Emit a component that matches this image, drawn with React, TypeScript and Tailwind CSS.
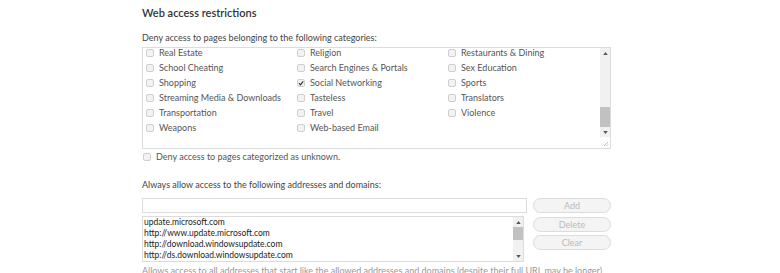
import React from "react";

const cats: [string, boolean][][] = [
  [["Real Estate", false], ["Religion", false], ["Restaurants & Dining", false]],
  [["School Cheating", false], ["Search Engines & Portals", false], ["Sex Education", false]],
  [["Shopping", false], ["Social Networking", true], ["Sports", false]],
  [["Streaming Media & Downloads", false], ["Tasteless", false], ["Translators", false]],
  [["Transportation", false], ["Travel", false], ["Violence", false]],
  [["Weapons", false], ["Web-based Email", false], ["", false]],
];

function Box({ checked }: { checked?: boolean }) {
  return (
    <span className="relative inline-block w-[8px] h-[8px] shrink-0 rounded-[2px] border border-[#cfcfcf] bg-[#f2f2f2]">
      {checked && (
        <svg viewBox="0 0 8 8" className="absolute left-[-1px] top-[-1px] w-[8px] h-[8px]">
          <path d="M2 4.2 L3.5 5.8 L6.2 2.3" stroke="#333" strokeWidth="1.2" fill="none" />
        </svg>
      )}
    </span>
  );
}

function Arrow({ up }: { up?: boolean }) {
  return (
    <svg viewBox="0 0 6 4" className="w-[5px] h-[3px]">
      {up ? <path d="M0 4 L3 0 L6 4 Z" fill="#555" /> : <path d="M0 0 L6 0 L3 4 Z" fill="#555" />}
    </svg>
  );
}

export default function App() {
  return (
    <div className="w-[780px] h-[273px] overflow-hidden bg-white" style={{ fontFamily: "Lato, 'Open Sans', sans-serif" }}>
      <div className="ml-[142px] w-[469px] pt-[6px]">
        <div className="text-[11px] leading-[14px] font-semibold text-[#333]">Web access restrictions</div>
        <div className="mt-[11px] text-[9px] leading-[14px] text-[#444] whitespace-nowrap">Deny access to pages belonging to the following categories:</div>
        <div className="mt-[2px] relative h-[102px] border border-[#dcdcdc] flex overflow-hidden">
          <div className="flex-1 pl-[3px] -mt-[3px]">
            {cats.map((row, i) => (
              <div key={i} className="flex h-[15px] items-center">
                {row.map(([label, checked], j) => (
                  <div key={j} className="w-[151px] flex items-center gap-[5px] text-[9px] text-[#555] whitespace-nowrap">
                    {label && <Box checked={checked} />}
                    <span>{label}</span>
                  </div>
                ))}
              </div>
            ))}
          </div>
          <div className="w-[10px] flex flex-col">
            <div className="flex-1 bg-[#f1f1f1] flex flex-col items-center">
              <div className="h-[10px] flex items-center"><Arrow up /></div>
              <div className="h-[49px]" />
              <div className="w-[10px] h-[20px] bg-[#c1c1c1]" />
              <div className="flex-1" />
              <div className="h-[10px] flex items-center"><Arrow /></div>
            </div>
            <div className="h-[11px] bg-white relative">
              <svg viewBox="0 0 10 11" className="absolute inset-0 w-[10px] h-[11px]">
                <path d="M8 5 L4 9 M8 7.5 L6.5 9" stroke="#aaa" strokeWidth="0.8" />
              </svg>
            </div>
          </div>
        </div>
        <div className="mt-[3px] flex items-center gap-[5px] pl-[1px] h-[10px] text-[9px] text-[#555] whitespace-nowrap">
          <Box />
          <span>Deny access to pages categorized as unknown.</span>
        </div>
        <div className="mt-[16px] text-[9px] leading-[14px] text-[#444] whitespace-nowrap">Always allow access to the following addresses and domains:</div>
        <div className="mt-[6px] flex gap-[6px]">
          <div className="w-[385px] flex flex-col gap-[3px]">
            <div className="h-[15px] border border-[#dcdcdc]" />
            <div className="h-[46px] border border-[#dcdcdc] flex overflow-hidden w-[382px]">
              <div className="flex-1 h-[44px] overflow-hidden pl-[1px] text-[8.5px] leading-[11px] text-[#222] whitespace-nowrap">
                <div>update.microsoft.com</div>
                <div>http://www.update.microsoft.com</div>
                <div>http://download.windowsupdate.com</div>
                <div>http://ds.download.windowsupdate.com</div>
              </div>
              <div className="w-[10px] bg-[#f1f1f1] flex flex-col items-center">
                <div className="h-[10px] flex items-center"><Arrow up /></div>
                <div className="w-[10px] h-[13px] bg-[#c1c1c1]" />
                <div className="flex-1" />
                <div className="h-[10px] flex items-center"><Arrow /></div>
              </div>
            </div>
          </div>
          <div className="w-[78px] flex flex-col">
            <button className="h-[15px] rounded-full border border-[#dcdcdc] bg-[#f4f4f4] text-[9px] leading-[13px] text-[#bbb]">Add</button>
            <button className="mt-[4px] h-[15px] rounded-full border border-[#dcdcdc] bg-[#f4f4f4] text-[9px] leading-[13px] text-[#bbb]">Delete</button>
            <button className="mt-[3px] h-[15px] rounded-full border border-[#dcdcdc] bg-[#f4f4f4] text-[9px] leading-[13px] text-[#bbb]">Clear</button>
          </div>
        </div>
        <div className="mt-[2px] text-[9px] leading-[13px] text-[#999] whitespace-nowrap">Allows access to all addresses that start like the allowed addresses and domains (despite their full URL may be longer)</div>
      </div>
    </div>
  );
}
